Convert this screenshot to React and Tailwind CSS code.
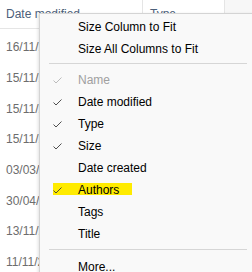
const dates = ['16/11/2023', '15/11/2023', '15/11/2023', '15/11/2023', '03/03/2023', '30/04/2023', '13/11/2023', '11/11/2023'];

const items = [
  { label: 'Name', checked: true, disabled: true },
  { label: 'Date modified', checked: true },
  { label: 'Type', checked: true },
  { label: 'Size', checked: true },
  { label: 'Date created' },
  { label: 'Authors', checked: true, marked: true },
  { label: 'Tags' },
  { label: 'Title' },
];

function Check({ dim }) {
  return (
    <svg width="9" height="7" viewBox="0 0 9 7" className="absolute left-[13px] top-[8px]">
      <polyline points="0.5,3.5 3,6 8.5,0.5" fill="none" stroke={dim ? '#b4b4b4' : '#3c3c3c'} strokeWidth="0.9" />
    </svg>
  );
}

function MenuItem({ label, checked, disabled, marked }) {
  return (
    <div className="relative h-[22px] flex items-center pl-[38px]">
      {marked && <div className="absolute left-[13px] top-[4px] w-[79px] h-[12px] bg-[#ffeb00]" />}
      {checked && <Check dim={disabled} />}
      <span className={`relative leading-none ${disabled ? 'text-[#a0a0a0]' : 'text-black'}`}>{label}</span>
    </div>
  );
}

export default function App() {
  return (
    <div className="relative w-[252px] h-[272px] overflow-hidden bg-white font-['Segoe_UI','Liberation_Sans',sans-serif] text-[12px]">
      {/* column headers */}
      <div className="flex h-[29px] items-center border-b border-[#e5e5e5]">
        <div className="w-[143px] h-full flex items-center pl-[6px] border-r border-[#e5e5e5] text-[#4c607a]">Date modified</div>
        <div className="w-[82px] h-full flex items-center pl-[7px] border-r border-[#e5e5e5] text-[#4c607a]">Type</div>
        <div className="flex-1 h-full bg-[#f7f7f7]" />
      </div>
      {/* file rows */}
      <div className="pt-[3px]">
        {dates.map((d, i) => (
          <div key={i} className="h-[30.7px] flex items-center pl-[6px] text-[#6d6d6d]">{d}</div>
        ))}
      </div>

      {/* context menu */}
      <div className="absolute left-[39px] top-[13px] w-[240px] h-[300px] bg-[#f9f9f9] border border-[#d4d4d4] shadow-[-1px_1px_3px_rgba(0,0,0,0.12)] pt-[2px]">
        <MenuItem label="Size Column to Fit" />
        <MenuItem label="Size All Columns to Fit" />
        <div className="mt-[3px] mb-[5px] ml-[9px] w-[198px] h-px bg-[#d6d6d6]" />
        {items.map((it) => (
          <MenuItem key={it.label} {...it} />
        ))}
        <div className="mt-[4px] mb-[6px] ml-[9px] w-[198px] h-px bg-[#d6d6d6]" />
        <MenuItem label="More..." />
      </div>
    </div>
  );
}
